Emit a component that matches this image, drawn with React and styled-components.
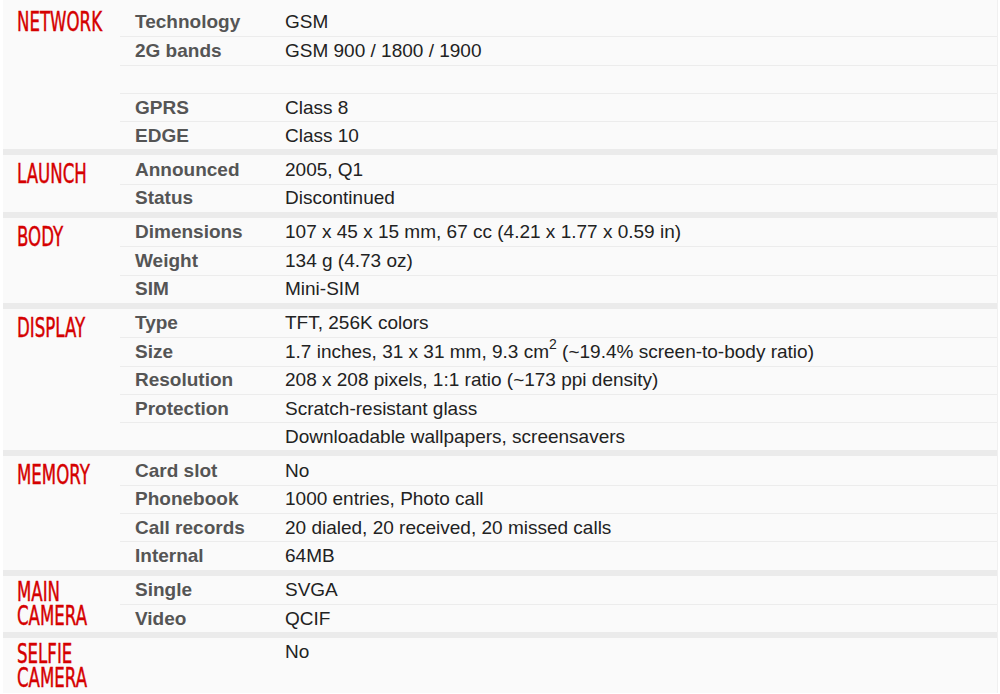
import React from 'react';
import styled, { createGlobalStyle } from 'styled-components';

const GlobalStyle = createGlobalStyle`
  html, body {
    margin: 0;
    padding: 0;
    background: #ffffff;
  }
  body {
    font-family: "Liberation Sans", Arial, sans-serif;
  }
`;

const Specs = styled.div`
  margin-left: 3px;
  width: 995px;
  background: #fafafa;
  border-right: 1px solid #f0f0f0;
  box-sizing: border-box;
  padding-top: 8px;
`;

const Section = styled.div`
  display: flex;
  border-top: ${props => props.first ? 'none' : '6px solid #ebebeb'};
`;

const Heading = styled.div`
  width: 117px;
  flex-shrink: 0;
  padding: ${props => props.pad}px 0 7px 14px;
  box-sizing: border-box;
`;

// condensed red title, squeezed to match the narrow display face
const Title = styled.div`
  color: #d50000;
  font-family: "DejaVu Sans Condensed", "Liberation Sans Narrow", "Liberation Sans", sans-serif;
  font-size: 24px;
  line-height: 22px;
  text-transform: uppercase;
  white-space: nowrap;
  -webkit-text-stroke: 0.4px #d50000;
  transform: scale(0.77, 1.1);
  transform-origin: left top;
`;

const Rows = styled.div`
  flex: 1;
  display: flex;
  flex-direction: column;
`;

const Row = styled.div`
  display: flex;
  align-items: center;
  height: 28.3px;
  box-sizing: border-box;
  border-top: ${props => props.first ? 'none' : '1px solid #ececec'};
  font-size: 19px;
`;

const Label = styled.div`
  width: 150px;
  flex-shrink: 0;
  padding-left: 15px;
  box-sizing: border-box;
  font-weight: bold;
  color: #555555;
`;

const Value = styled.div`
  padding-left: 15px;
  color: #222222;
  white-space: nowrap;

  sup {
    font-size: 14px;
    line-height: 0;
    position: relative;
    top: -2px;
  }
`;

const specs = [
  {
    title: ['Network'],
    rows: [
      ['Technology', 'GSM'],
      ['2G bands', 'GSM 900 / 1800 / 1900'],
      ['', ''],
      ['GPRS', 'Class 8'],
      ['EDGE', 'Class 10'],
    ],
  },
  {
    title: ['Launch'],
    rows: [
      ['Announced', '2005, Q1'],
      ['Status', 'Discontinued'],
    ],
  },
  {
    title: ['Body'],
    rows: [
      ['Dimensions', '107 x 45 x 15 mm, 67 cc (4.21 x 1.77 x 0.59 in)'],
      ['Weight', '134 g (4.73 oz)'],
      ['SIM', 'Mini-SIM'],
    ],
  },
  {
    title: ['Display'],
    rows: [
      ['Type', 'TFT, 256K colors'],
      ['Size', <>1.7 inches, 31 x 31 mm, 9.3 cm<sup>2</sup> (~19.4% screen-to-body ratio)</>],
      ['Resolution', '208 x 208 pixels, 1:1 ratio (~173 ppi density)'],
      ['Protection', 'Scratch-resistant glass'],
      ['', 'Downloadable wallpapers, screensavers'],
    ],
  },
  {
    title: ['Memory'],
    rows: [
      ['Card slot', 'No'],
      ['Phonebook', '1000 entries, Photo call'],
      ['Call records', '20 dialed, 20 received, 20 missed calls'],
      ['Internal', '64MB'],
    ],
  },
  {
    title: ['Main', 'Camera'],
    rows: [
      ['Single', 'SVGA'],
      ['Video', 'QCIF'],
    ],
  },
  {
    title: ['Selfie', 'Camera'],
    rows: [
      ['', 'No'],
    ],
  },
];

const headingPad = (i, lines) => {
  if (i === 0) return 2;
  return lines > 1 ? 4 : 7;
};

const App = () => (
  <>
    <GlobalStyle />
    <Specs>
      {specs.map((section, i) => (
        <Section key={i} first={i === 0}>
          <Heading pad={headingPad(i, section.title.length)}>
            <Title>
              {section.title.map((line, j) => <div key={j}>{line}</div>)}
            </Title>
          </Heading>
          <Rows>
            {section.rows.map(([label, value], k) => (
              <Row key={k} first={k === 0}>
                <Label>{label}</Label>
                <Value>{value}</Value>
              </Row>
            ))}
          </Rows>
        </Section>
      ))}
    </Specs>
  </>
);

export default App;
